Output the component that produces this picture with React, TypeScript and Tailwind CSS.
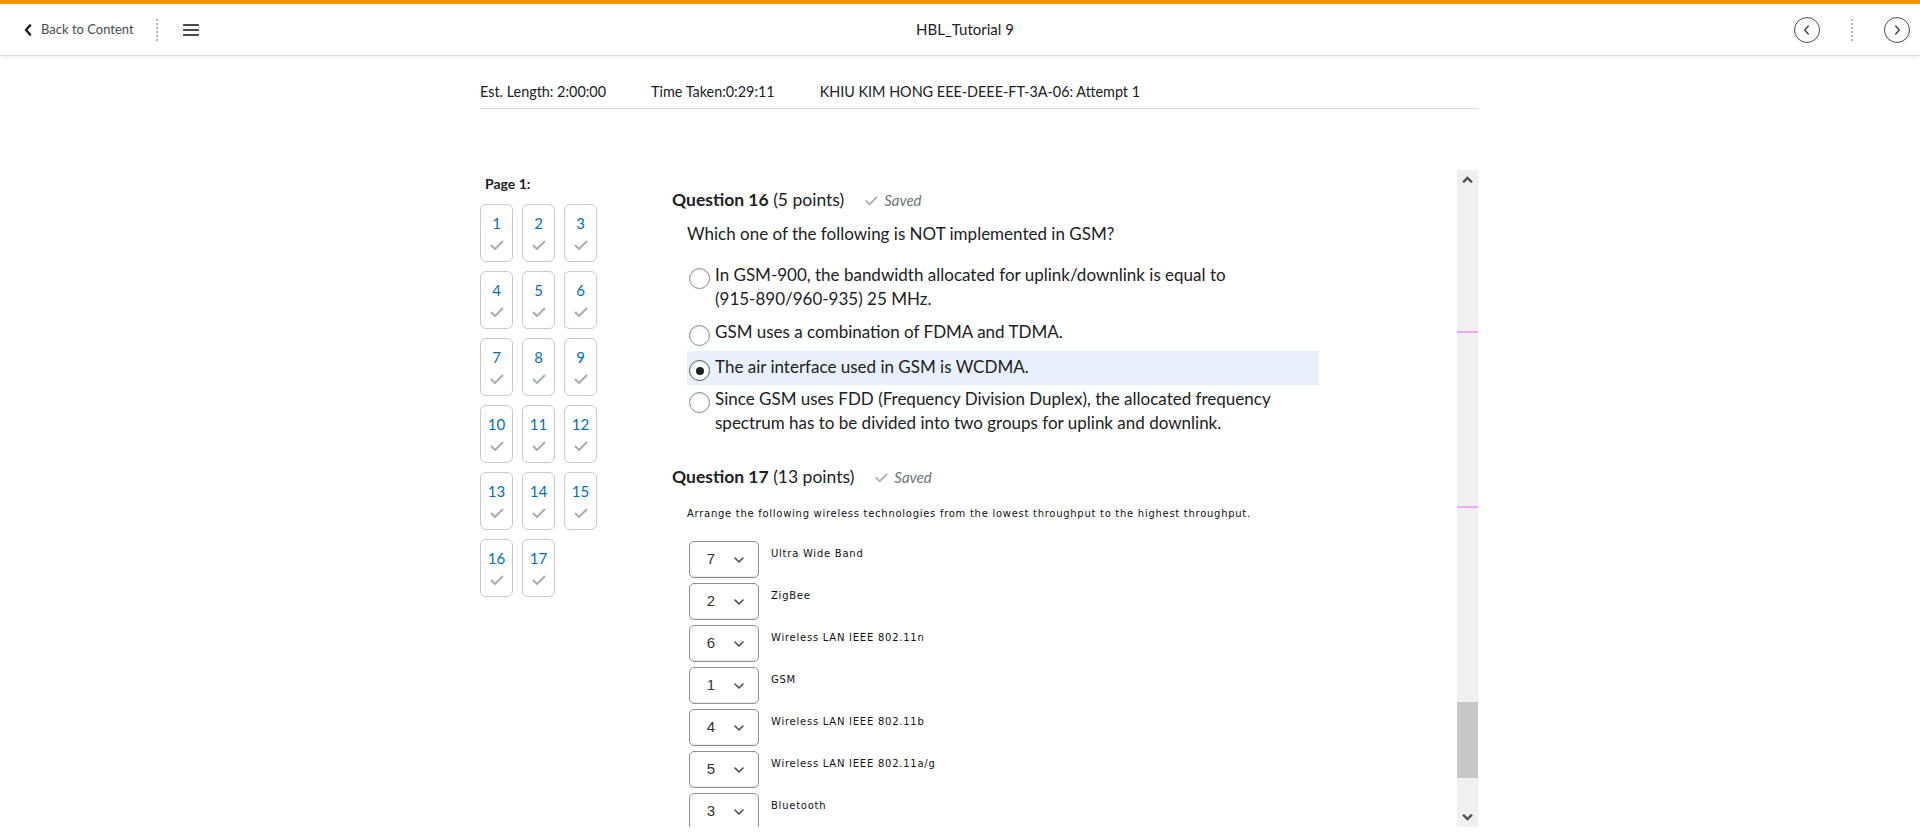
import React from "react";

const Check = ({ className }: { className?: string }) => (
  <svg viewBox="0 0 16 16" className={className} fill="none" stroke="currentColor" strokeWidth="2" strokeLinecap="round" strokeLinejoin="round">
    <path d="M2.5 8.5l3.5 3.5L13.5 4.5" />
  </svg>
);

const Radio = ({ selected }: { selected?: boolean }) => (
  <span className={`mt-[5px] w-[21px] h-[21px] rounded-full border ${selected ? "border-[#565a5c]" : "border-[#868a8d]"} bg-white shadow-[inset_0_1px_2px_rgba(0,0,0,0.12)] flex items-center justify-center shrink-0`}>
    {selected && <span className="w-[8px] h-[8px] rounded-full bg-[#202122]" />}
  </span>
);

const Option = ({ children, selected, className }: { children: React.ReactNode; selected?: boolean; className?: string }) => (
  <div className={`flex gap-[5px] px-[2px] py-[4px] w-[632px] ${selected ? "bg-[#e8f1fb]" : ""} ${className ?? ""}`}>
    <Radio selected={selected} />
    <span className="text-[17px] leading-[24px] text-[#202122] w-[595px]">{children}</span>
  </div>
);

const Saved = () => (
  <span className="flex items-center gap-[5px] ml-[20px] text-[#6e7376]">
    <Check className="w-[15px] h-[15px] text-[#b1b5b8]" />
    <span className="italic text-[15px]">Saved</span>
  </span>
);

const Select = ({ n, label }: { n: number; label: string }) => (
  <div className="flex items-start gap-[12px]">
    <div className="w-[70px] h-[37px] border border-[#8f9193] rounded-[5px] flex items-center shrink-0 shadow-[inset_0_-1px_0_rgba(0,0,0,0.08)]">
      <span className="ml-[16px] w-[10px] text-center text-[15px] text-[#333] font-['Liberation_Sans',sans-serif]">{n}</span>
      <svg viewBox="0 0 10 6" className="ml-[18px] w-[10px] h-[6px]" fill="none" stroke="#494c4e" strokeWidth="1.6" strokeLinecap="round" strokeLinejoin="round">
        <path d="M1 1l4 4 4-4" />
      </svg>
    </div>
    <span className="mt-[6px] text-[10px] leading-[14px] tracking-[0.75px] text-[#111] font-['DejaVu_Sans',Verdana,sans-serif]">{label}</span>
  </div>
);

const Dots = () => (
  <div className="h-[22px] w-[2px] border-l-2 border-dotted border-[#b5babe]" />
);

export default function App() {
  const nums = Array.from({ length: 17 }, (_, i) => i + 1);
  const selects: [number, string][] = [
    [7, "Ultra Wide Band"],
    [2, "ZigBee"],
    [6, "Wireless LAN IEEE 802.11n"],
    [1, "GSM"],
    [4, "Wireless LAN IEEE 802.11b"],
    [5, "Wireless LAN IEEE 802.11a/g"],
    [3, "Bluetooth"],
  ];
  return (
    <div className="w-[1920px] h-[838px] overflow-hidden bg-white font-['Lato',sans-serif] text-[#202122]">
      <div className="h-[4px] bg-[#f39100]" />
      <header className="h-[52px] grid grid-cols-[1fr_auto_1fr] items-center border-b border-[#dcdfe1] shadow-[0_2px_3px_rgba(0,0,0,0.06)]">
        <div className="flex items-center">
          <div className="flex items-center ml-[24px] gap-[9px] text-[#494c4e]">
            <svg viewBox="0 0 8 12" className="w-[8px] h-[12px]" fill="none" stroke="#202122" strokeWidth="2.6" strokeLinecap="round" strokeLinejoin="round">
              <path d="M6 1.5L2 6l4 4.5" />
            </svg>
            <span className="text-[13px]">Back to Content</span>
          </div>
          <div className="ml-[22px]"><Dots /></div>
          <svg viewBox="0 0 16 12" className="ml-[25px] w-[16px] h-[12px]" fill="#494c4e">
            <rect x="0" y="0" width="16" height="2" rx="0.5" />
            <rect x="0" y="5" width="16" height="2" rx="0.5" />
            <rect x="0" y="10" width="16" height="2" rx="0.5" />
          </svg>
        </div>
        <div className="text-[15px] pl-[10px]">HBL_Tutorial 9</div>
        <div className="flex items-center justify-end pr-[10px]">
          <div className="w-[26px] h-[26px] rounded-full border-[1.5px] border-[#494c4e] flex items-center justify-center">
            <svg viewBox="0 0 8 12" className="w-[7px] h-[12px] -ml-[1px]" fill="none" stroke="#494c4e" strokeWidth="1.8" strokeLinecap="round" strokeLinejoin="round"><path d="M6 1.5L2 6l4 4.5" /></svg>
          </div>
          <div className="mx-[31px]"><Dots /></div>
          <div className="w-[26px] h-[26px] rounded-full border-[1.5px] border-[#494c4e] flex items-center justify-center">
            <svg viewBox="0 0 8 12" className="w-[7px] h-[12px] ml-[1px]" fill="none" stroke="#494c4e" strokeWidth="1.8" strokeLinecap="round" strokeLinejoin="round"><path d="M2 1.5L6 6l-4 4.5" /></svg>
          </div>
        </div>
      </header>

      <div className="ml-[480px] w-[998px]">
        <div className="mt-[26px] pb-[6px] border-b border-[#d3d9e3] flex gap-[45px] text-[14.4px] leading-[20px]">
          <span>Est. Length: 2:00:00</span>
          <span>Time Taken:0:29:11</span>
          <span>KHIU KIM HONG EEE-DEEE-FT-3A-06: Attempt 1</span>
        </div>

        <div className="mt-[61px] flex">
          <div className="w-[160px] shrink-0">
            <div className="pt-[4px] pl-[5px] text-[14px] leading-[20px] font-bold">Page 1:</div>
            <div className="mt-[10px] grid grid-cols-[33px_33px_33px] gap-[9px]">
              {nums.map((n) => (
                <div key={n} className="w-[33px] h-[58px] border border-[#c7cbce] rounded-[6px] flex flex-col items-center">
                  <span className="mt-[8px] text-[15px] leading-[20px] text-[#006fbf]">{n}</span>
                  <Check className="mt-[4px] w-[16px] h-[16px] text-[#a9adb1]" />
                </div>
              ))}
            </div>
          </div>

          <div className="flex-1 h-[657px] flex">
            <div className="flex-1 overflow-hidden pl-[32px] pt-[18px]">
              <div className="flex items-center h-[24px]">
                <span className="text-[17.5px]"><span className="font-bold">Question 16</span> (5 points)</span>
                <Saved />
              </div>
              <div className="ml-[15px]">
                <div className="mt-[10px] text-[17px] leading-[24px]">Which one of the following is NOT implemented in GSM?</div>
                <div className="mt-[13px] flex flex-col gap-[1px]">
                  <Option>
                    In GSM-900, the bandwidth allocated for uplink/downlink is equal to{" "}
                    <span className="whitespace-nowrap">(915-890/960-935)</span> 25 MHz.
                  </Option>
                  <Option>GSM uses a combination of FDMA and TDMA.</Option>
                  <Option selected>The air interface used in GSM is WCDMA.</Option>
                  <Option className="-mt-[3px]">
                    Since GSM uses FDD (Frequency Division Duplex), the allocated frequency spectrum has to be divided into two groups for uplink and downlink.
                  </Option>
                </div>
              </div>
              <div className="mt-[26px] flex items-center h-[24px]">
                <span className="text-[17.5px]"><span className="font-bold">Question 17</span> (13 points)</span>
                <Saved />
              </div>
              <div className="ml-[15px]">
                <div className="mt-[18px] text-[10px] leading-[14px] tracking-[0.72px] text-[#111] font-['DejaVu_Sans',Verdana,sans-serif]">
                  Arrange the following wireless technologies from the lowest throughput to the highest throughput.
                </div>
                <div className="mt-[20px] ml-[2px] flex flex-col gap-[5px]">
                  {selects.map(([n, l]) => (
                    <Select key={l} n={n} label={l} />
                  ))}
                </div>
              </div>
            </div>
            <div className="w-[21px] h-full bg-[#f0f0f0] relative flex flex-col items-center justify-between py-[6px]">
              <svg viewBox="0 0 10 6" className="w-[11px] h-[7px]" fill="none" stroke="#505050" strokeWidth="2.2"><path d="M1 5.5l4-4 4 4" /></svg>
              <svg viewBox="0 0 10 6" className="w-[11px] h-[7px]" fill="none" stroke="#505050" strokeWidth="2.2"><path d="M1 0.5l4 4 4-4" /></svg>
              <div className="absolute left-0 right-0 top-[161px] h-[2px] bg-[#eeaaf0]" />
              <div className="absolute left-0 right-0 top-[336px] h-[2px] bg-[#eeaaf0]" />
              <div className="absolute left-0 right-0 top-[532px] h-[76px] bg-[#c8c8c8]" />
            </div>
          </div>
        </div>
      </div>
    </div>
  );
}
